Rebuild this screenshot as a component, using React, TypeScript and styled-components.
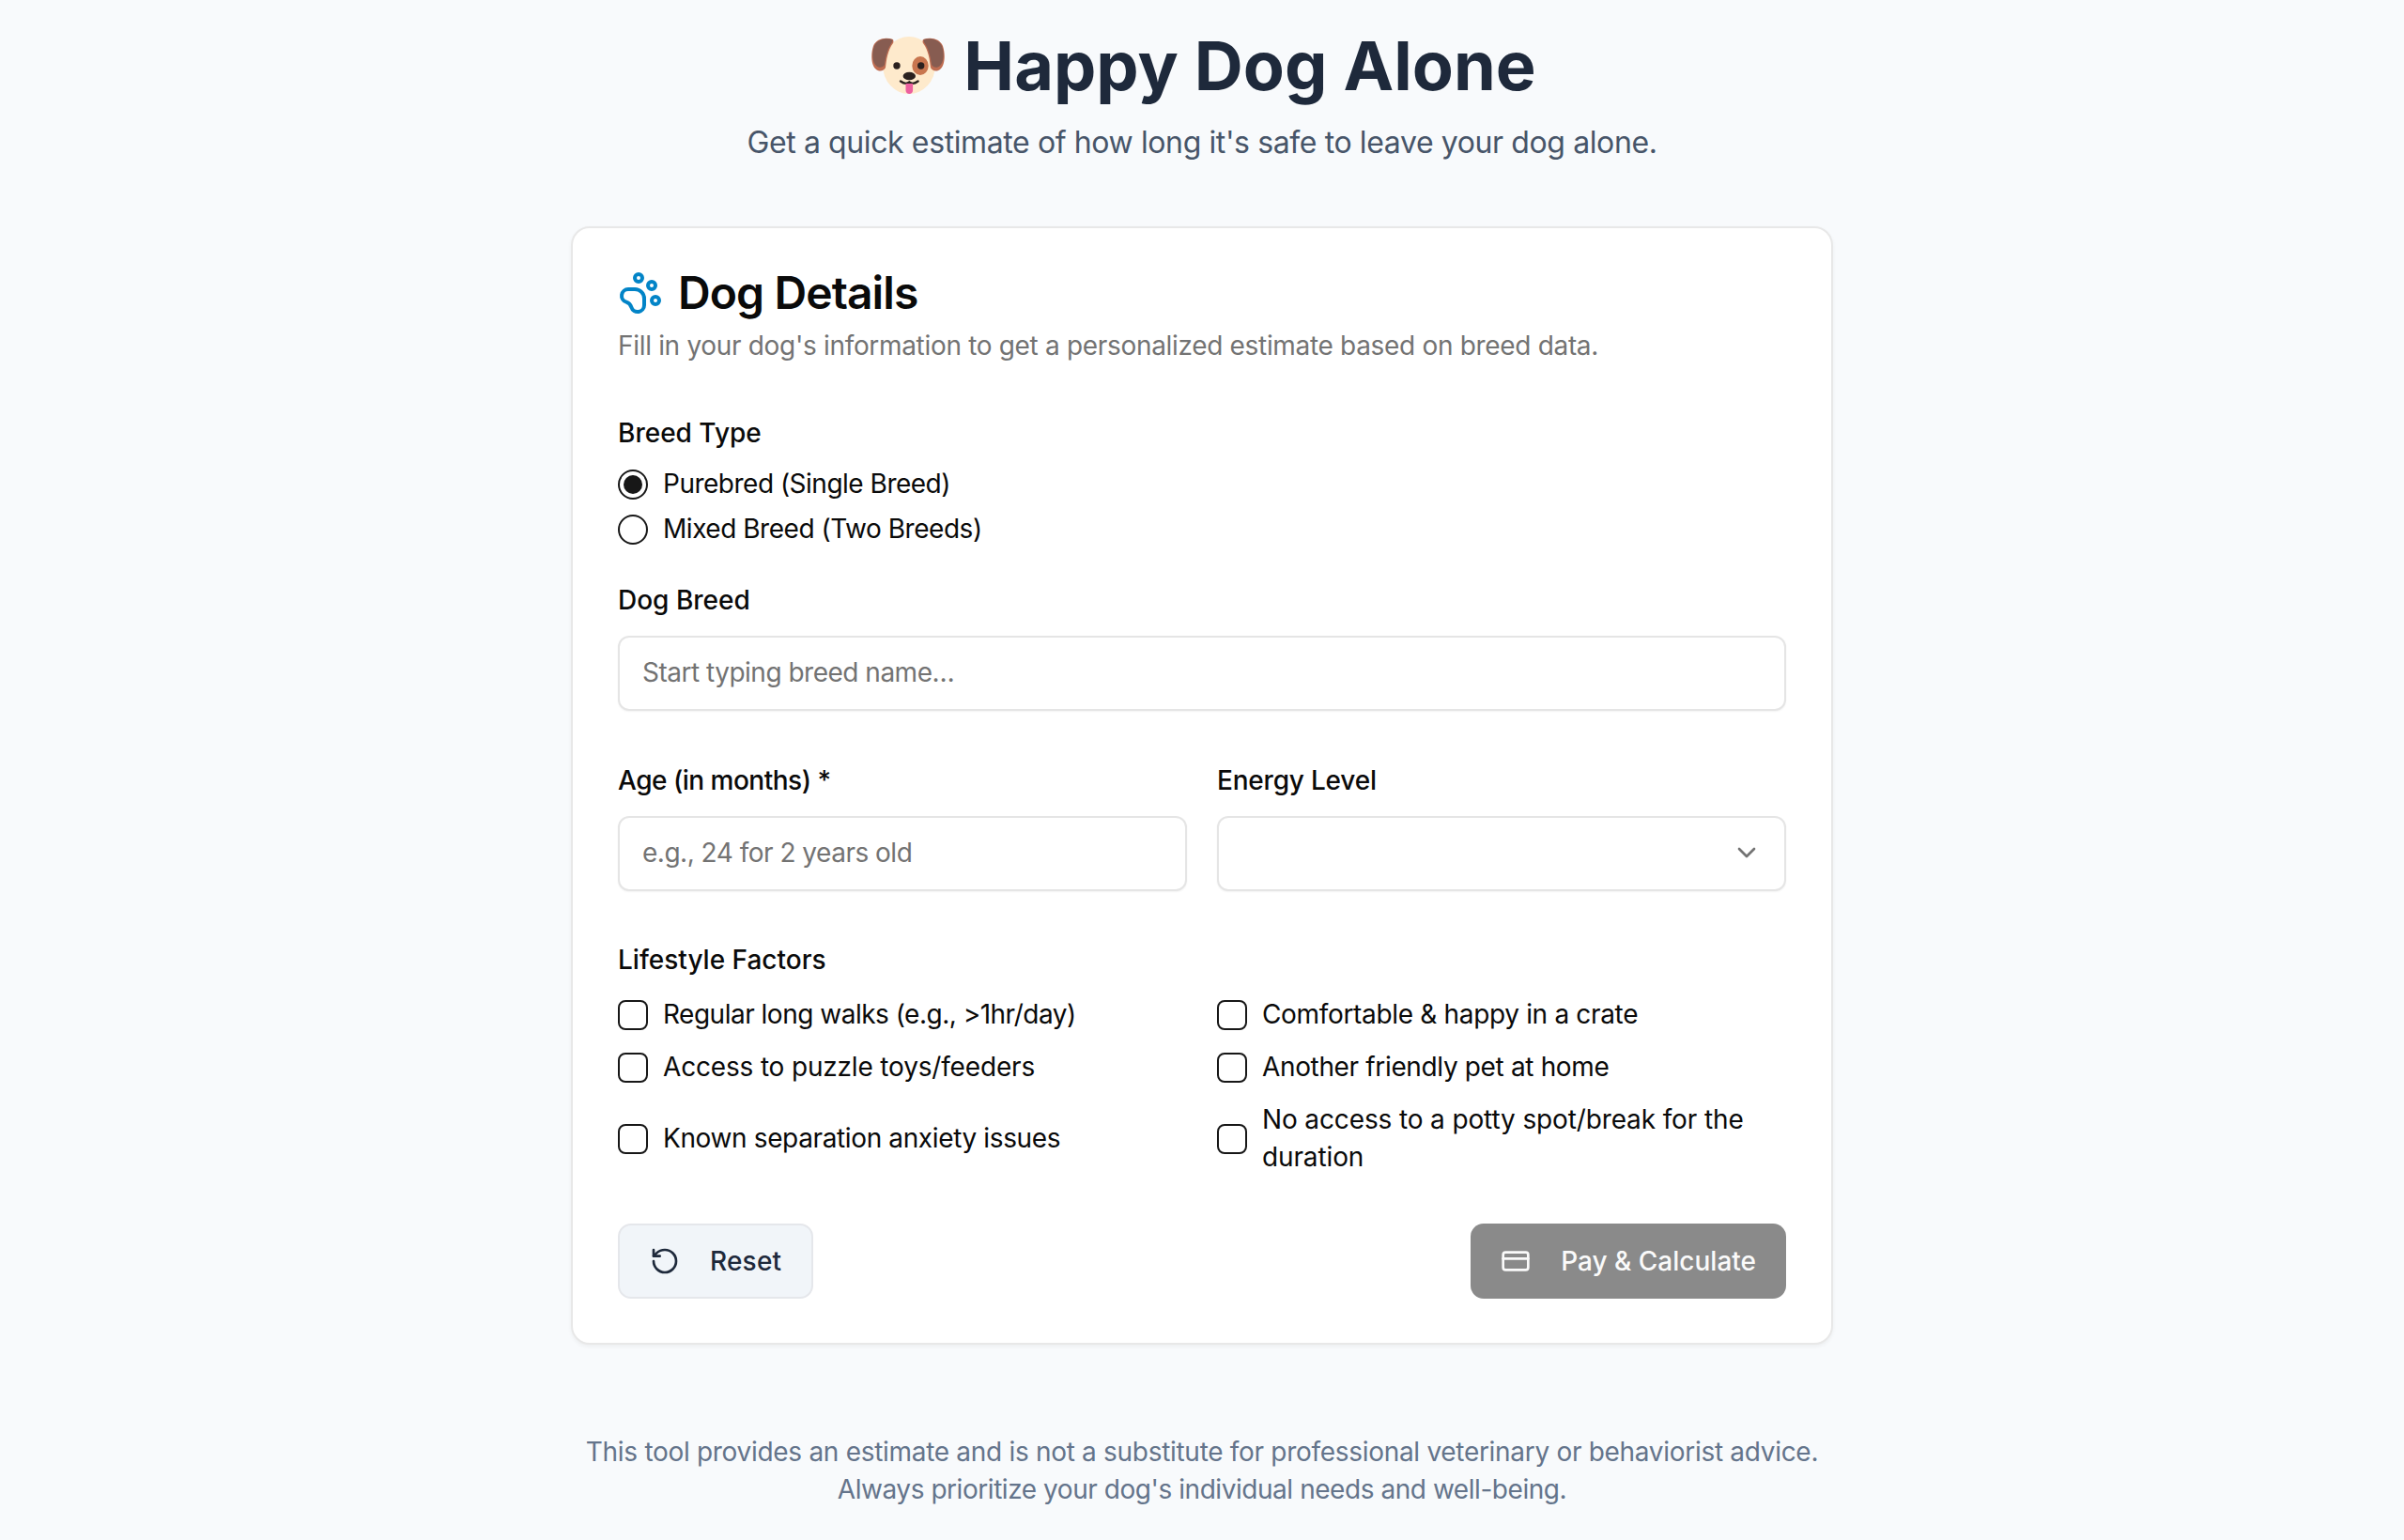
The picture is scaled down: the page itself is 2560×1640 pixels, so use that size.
import React from "react";
import styled, { createGlobalStyle } from "styled-components";
import { ChevronDown, CreditCard, RotateCcw } from "lucide-react";

const GlobalStyle = createGlobalStyle`
  html, body {
    margin: 0;
    padding: 0;
    background: #f8fafc;
    font-family: "Inter", "Liberation Sans", sans-serif;
    color: #0a0a0a;
  }
  * { box-sizing: border-box; }
`;

const Page = styled.main`
  width: 2560px;
  height: 1640px;
  overflow: hidden;
  display: flex;
  flex-direction: column;
  align-items: center;
  padding-top: 30px;
`;

const Header = styled.header`
  display: flex;
  flex-direction: column;
  align-items: center;
  gap: 22px;
  margin-bottom: 69px;
`;

const Title = styled.h1`
  margin: 0;
  padding-left: 4px;
  display: flex;
  align-items: center;
  gap: 20px;
  font-size: 72px;
  line-height: 80px;
  font-weight: 700;
  letter-spacing: 0;
  color: #1e293b;
`;

const Subtitle = styled.p`
  margin: 0;
  font-size: 32px;
  line-height: 40px;
  letter-spacing: -0.39px;
  color: #475569;
`;

const Card = styled.section`
  width: 1344px;
  height: 1191px;
  padding: 45px 48px 47px;
  background: #fff;
  border: 2px solid #e8e8e8;
  border-radius: 20px;
  box-shadow: 0 2px 4px rgba(0, 0, 0, 0.05);
  display: flex;
  flex-direction: column;
`;

const CardTitle = styled.h2`
  margin: 0;
  display: flex;
  align-items: center;
  gap: 16px;
  font-size: 48px;
  line-height: 48px;
  font-weight: 600;
  letter-spacing: -0.9px;
  color: #0a0a0a;
`;

const Description = styled.p`
  margin: 12px 0 53px;
  font-size: 28px;
  line-height: 40px;
  letter-spacing: -0.32px;
  color: #737373;
`;

const Label = styled.div<{ $tracking?: number }>`
  font-size: 28px;
  line-height: 40px;
  font-weight: 500;
  letter-spacing: ${({ $tracking }) => $tracking ?? 0}px;
`;

const RadioList = styled.div`
  display: flex;
  flex-direction: column;
  gap: 6px;
  margin: 14px 0 34px;
`;

const OptionRow = styled.label`
  display: flex;
  align-items: center;
  gap: 16px;
  font-size: 28px;
  line-height: 40px;
`;

const OptionText = styled.span<{ $tracking: number }>`
  padding-bottom: 2px;
  letter-spacing: ${({ $tracking }) => $tracking}px;
`;

const Radio = styled.span<{ $checked?: boolean }>`
  width: 32px;
  height: 32px;
  flex: none;
  border-radius: 50%;
  border: 2px solid #171717;
  display: flex;
  align-items: center;
  justify-content: center;
  &::after {
    content: "";
    display: ${({ $checked }) => ($checked ? "block" : "none")};
    width: 20px;
    height: 20px;
    border-radius: 50%;
    background: #171717;
  }
`;

const Field = styled.div`
  height: 80px;
  margin-top: 18px;
  padding: 0 24px 2px;
  border: 2px solid #e5e5e5;
  border-radius: 12px;
  box-shadow: 0 1px 2px rgba(0, 0, 0, 0.05);
  display: flex;
  align-items: center;
  justify-content: space-between;
  font-size: 28px;
  letter-spacing: -0.5px;
  color: #737373;
  background: #fff;
`;

const Section = styled.div<{ $gap: number }>`
  margin-bottom: ${({ $gap }) => $gap}px;
`;

const TwoCol = styled.div`
  display: grid;
  grid-template-columns: 1fr 1fr;
  column-gap: 32px;
`;

const ChecksGrid = styled(TwoCol)`
  margin-top: 18px;
  row-gap: 14px;
  align-items: center;
`;

const Checkbox = styled.span`
  width: 32px;
  height: 32px;
  flex: none;
  border-radius: 8px;
  border: 2px solid #171717;
`;

const Actions = styled.div`
  margin-top: auto;
  display: flex;
  justify-content: space-between;
`;

const Button = styled.button<{ $primary?: boolean }>`
  height: 80px;
  padding: 0 32px;
  display: flex;
  align-items: center;
  gap: 32px;
  font: 500 28px "Inter", "Liberation Sans", sans-serif;
  letter-spacing: ${({ $primary }) => ($primary ? "0" : "0.2px")};
  border-radius: 14px;
  border: ${({ $primary }) => ($primary ? "none" : "2px solid #e5e7eb")};
  background: ${({ $primary }) => ($primary ? "#8a8a8a" : "#f1f5f9")};
  color: ${({ $primary }) => ($primary ? "#fafafa" : "#1e293b")};
`;

const Footer = styled.footer`
  margin-top: 94px;
  text-align: center;
  font-size: 28px;
  line-height: 40px;
  color: #64748b;
`;

const FooterLine = styled.div<{ $tracking: number }>`
  letter-spacing: ${({ $tracking }) => $tracking}px;
`;

const PawIcon = () => (
  <svg width="48" height="48" viewBox="0 0 24 24" fill="none" stroke="#0284c7" strokeWidth="2" strokeLinecap="round" strokeLinejoin="round">
    <circle cx="11" cy="4" r="2" />
    <circle cx="18" cy="8" r="2" />
    <circle cx="20" cy="16" r="2" />
    <path d="M9 10a5 5 0 0 1 5 5v3.500a3.500 3.500 0 0 1-6.840 1.045Q6.520 17.480 4.460 16.840A3.500 3.500 0 0 1 5.500 10Z" />
  </svg>
);

const DogFace = () => (
  <svg width="78" height="62" viewBox="0 0 78 62">
    <ellipse cx="40" cy="30.500" rx="28" ry="30.500" fill="#feeacc" />
    <path d="M23 3C15 0 5 2 2 10C-1 19 0 30 4 34c4 4 9 3 11-1 1-8 2-18 8-26 1-1 0-4 0-4Z" fill="#c06d52" />
    <path d="M22 3C15 1 6 3 3 10 0 18 1 27 5 31c3 3 7 2 9-1 1-8 3-17 8-24 1-1 0-3 0-3Z" fill="#875c51" />
    <path d="M55 3c8-3 18-1 21 7 3 9 2 20-2 24-4 4-9 3-11-1-1-8-2-18-8-26-1-1 0-4 0-4Z" fill="#c06d52" />
    <path d="M56 3c7-2 16 0 19 7 3 8 2 17-2 21-3 3-7 2-9-1-1-8-3-17-8-24-1-1 0-3 0-3Z" fill="#875c51" />
    <ellipse cx="52" cy="31" rx="8.700" ry="10" fill="#c8764f" />
    <circle cx="27" cy="31" r="3.700" fill="#2b211f" />
    <circle cx="52.700" cy="31" r="3.700" fill="#2b211f" />
    <ellipse cx="40.300" cy="42" rx="6.700" ry="4.300" fill="#2b211f" />
    <path d="M31 47.500c4 3 7 3 9.300 1 2.300 2 5.300 2 9.300-1" fill="none" stroke="#2b211f" strokeWidth="2.400" strokeLinecap="round" />
    <path d="M36.500 50h7.600v7c0 2.500-1.700 4-3.800 4s-3.800-1.500-3.800-4Z" fill="#ec5f9f" />
  </svg>
);

const lifestyle = [
  { text: "Regular long walks (e.g., >1hr/day)", tracking: -0.5 },
  { text: "Comfortable & happy in a crate", tracking: -0.33 },
  { text: "Access to puzzle toys/feeders", tracking: -0.17 },
  { text: "Another friendly pet at home", tracking: -0.35 },
  { text: "Known separation anxiety issues", tracking: -0.37 },
  { text: "No access to a potty spot/break for the duration", tracking: -0.13 },
];

export default function App() {
  return (
    <Page>
      <GlobalStyle />
      <Header>
        <Title>
          <DogFace />
          Happy Dog Alone
        </Title>
        <Subtitle>Get a quick estimate of how long it's safe to leave your dog alone.</Subtitle>
      </Header>
      <Card>
        <CardTitle>
          <PawIcon />
          Dog Details
        </CardTitle>
        <Description>Fill in your dog's information to get a personalized estimate based on breed data.</Description>
        <Label>Breed Type</Label>
        <RadioList>
          <OptionRow>
            <Radio $checked />
            <OptionText $tracking={-0.5}>Purebred (Single Breed)</OptionText>
          </OptionRow>
          <OptionRow>
            <Radio />
            <OptionText $tracking={-0.47}>Mixed Breed (Two Breeds)</OptionText>
          </OptionRow>
        </RadioList>
        <Section $gap={54}>
          <Label>Dog Breed</Label>
          <Field>Start typing breed name…</Field>
        </Section>
        <Section $gap={53}>
          <TwoCol>
            <div>
              <Label $tracking={-0.5}>Age (in months) *</Label>
              <Field>e.g., 24 for 2 years old</Field>
            </div>
            <div>
              <Label $tracking={-0.2}>Energy Level</Label>
              <Field>
                <span />
                <ChevronDown size={32} strokeWidth={2} color="#737373" />
              </Field>
            </div>
          </TwoCol>
        </Section>
        <Label>Lifestyle Factors</Label>
        <ChecksGrid>
          {lifestyle.map(({ text, tracking }) => (
            <OptionRow key={text}>
              <Checkbox />
              <OptionText $tracking={tracking}>{text}</OptionText>
            </OptionRow>
          ))}
        </ChecksGrid>
        <Actions>
          <Button>
            <RotateCcw size={32} strokeWidth={2} />
            Reset
          </Button>
          <Button $primary>
            <CreditCard size={32} strokeWidth={2} />
            Pay &amp; Calculate
          </Button>
        </Actions>
      </Card>
      <Footer>
        <FooterLine $tracking={-0.3}>
          This tool provides an estimate and is not a substitute for professional veterinary or behaviorist advice.
        </FooterLine>
        <FooterLine $tracking={-0.45}>Always prioritize your dog's individual needs and well-being.</FooterLine>
      </Footer>
    </Page>
  );
}
